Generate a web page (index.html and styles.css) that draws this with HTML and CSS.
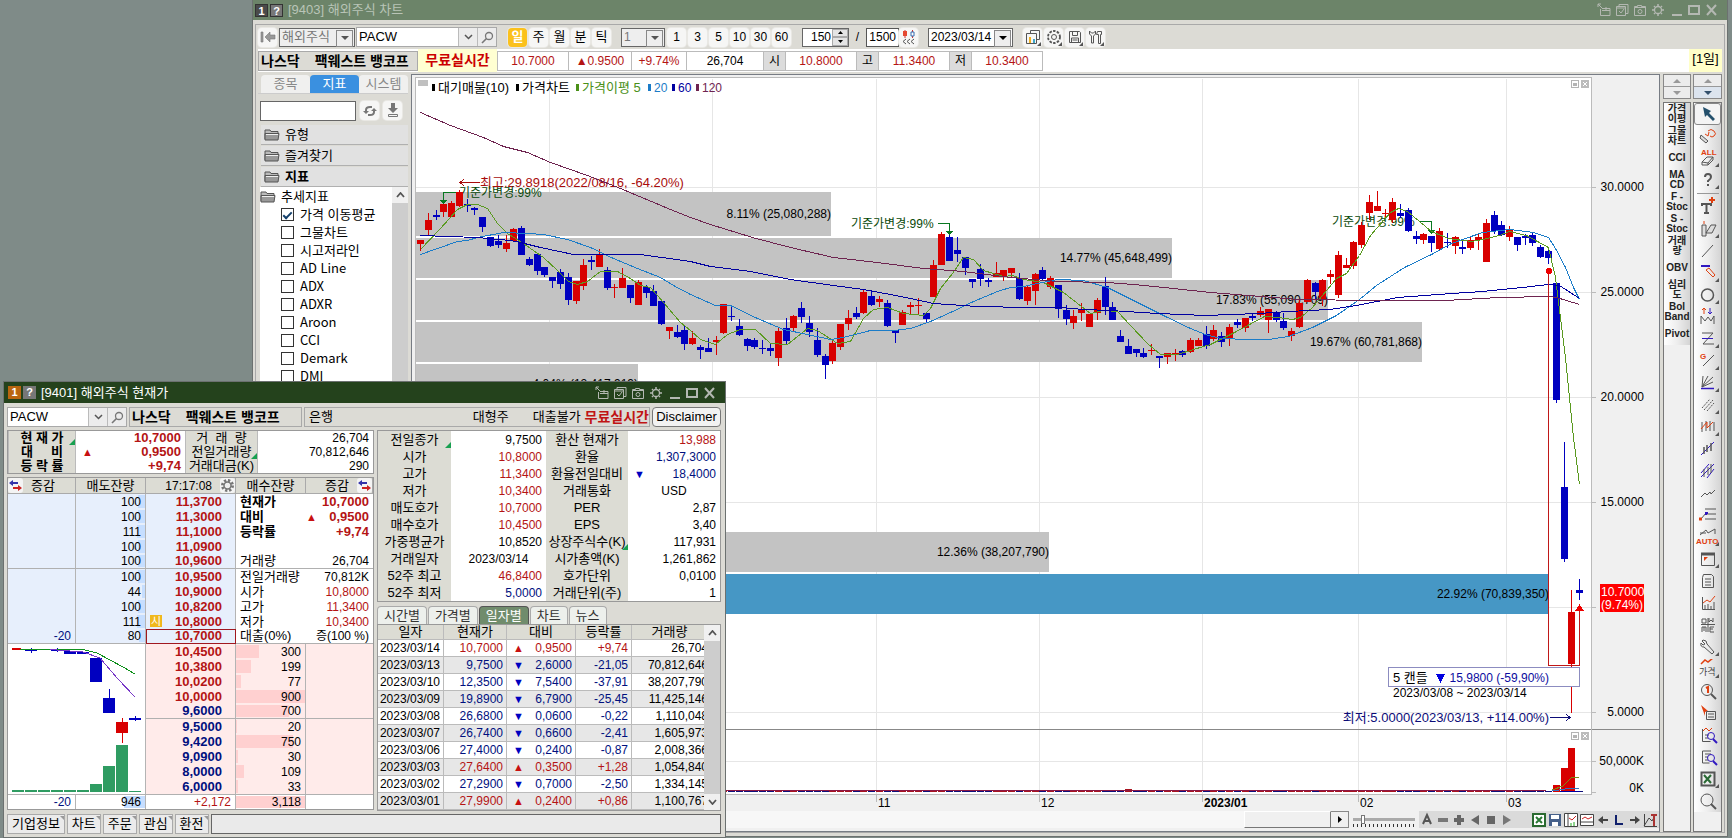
FILE: index.html
```html
<!DOCTYPE html>
<html lang="ko">
<head>
<meta charset="utf-8">
<title>해외주식 차트</title>
<link rel="stylesheet" href="styles.css">
</head>
<body>
<main class="desktop">

<section class="win chart-win" aria-label="해외주식 차트">
  <header class="title">
    <span class="tag">1</span><span class="tag help">?</span>
    <h1>[9403] 해외주식 차트</h1>
    <div class="winctl" data-winctl></div>
  </header>
  <div class="win-body">
    <div class="toolbar">
      <button class="tb ghost" aria-label="처음으로"><svg width="16" height="12"><path d="M1 1h2v10h-2zM5 6l5-5v3h5v4h-5v3z" fill="#999" stroke="#777" stroke-width=".6"/></svg></button>
      <div class="combo market"><select aria-label="시장"><option>해외주식</option></select></div>
      <div class="code"><input type="text" value="PACW" aria-label="종목코드"><button aria-label="목록"><svg width="9" height="6"><path d="M1 1l3.500 3.500L8 1" fill="none" stroke="#555" stroke-width="1.500"/></svg></button><button aria-label="검색"><svg width="13" height="13"><circle cx="8" cy="5" r="3.500" fill="none" stroke="#777" stroke-width="1.300"/><path d="M5.500 7.500L1 12" stroke="#777" stroke-width="1.600"/></svg></button></div>
      <div class="group periods"><button class="tb on">일</button><button class="tb">주</button><button class="tb">월</button><button class="tb">분</button><button class="tb">틱</button></div>
      <div class="combo minute"><select aria-label="간격"><option>1</option></select></div>
      <div class="group minutes"><button class="tb">1</button><button class="tb">3</button><button class="tb">5</button><button class="tb">10</button><button class="tb">30</button><button class="tb">60</button></div>
      <div class="spin"><input type="text" value="150" aria-label="조회 개수"><div><button aria-label="증가"><svg width="5" height="3"><path d="M0 3h5L2.500 0z"/></svg></button><button aria-label="감소"><svg width="5" height="3"><path d="M0 0h5L2.500 3z"/></svg></button></div></div>
      <span class="slash">/</span>
      <input class="total" type="text" value="1500" aria-label="전체 개수">
      <button class="tb fetch" aria-label="이전 데이터"><svg width="14" height="15"><path d="M3 0v8M10.500 0v8" stroke="#c33"/><path d="M1 1h4v5H1z" fill="#e54830"/><path d="M9 2h3v4H9z" fill="#fff" stroke="#356ab0"/><path d="M4 9L1 11.500 4 14M8 9l-3 2.500L8 14M12 9l-3 2.500L12 14" fill="none" stroke="#555"/></svg></button>
      <div class="combo date"><select aria-label="기준일"><option>2023/03/14</option></select></div>
      <div class="group tools">
        <button class="tb more" aria-label="차트 종류"><svg width="16" height="16" fill="none" stroke="#555"><path d="M5.500 4V1.500h9v9H12M1.500 4.500h10v10h-10z"/><path d="M5 14V8" stroke="#f0b020" stroke-width="2"/><path d="M9 14V10" stroke="#40a8c8" stroke-width="2"/></svg></button>
        <button class="tb more" aria-label="설정"><svg width="16" height="16" fill="none" stroke="#555"><circle cx="8" cy="8" r="6" stroke-dasharray="2.500 1.300" stroke-width="1.800"/><circle cx="8" cy="8" r="2.500"/></svg></button>
        <button class="tb more" aria-label="저장"><svg width="14" height="14" fill="none" stroke="#555"><path d="M1.500 1.500h10l1 1v10h-11zM4.500 1.500v4h5v-4M3.500 12v-4h7v4M4.500 10h5"/></svg></button>
        <button class="tb more" aria-label="도구"><svg width="15" height="15" fill="none" stroke="#555"><path d="M1.500 1v3l2 2v7h2V6l2-2V1l-2 2h-2zM9.500 1.500h4v3h-1v9h-2v-9h-2z"/></svg></button>
      </div>
    </div>

    <div class="info">
      <div class="name"><b>나스닥</b><b>팩웨스트 뱅코프</b></div>
      <strong class="free">무료실시간</strong>
      <div class="quotes">
        <span class="up w72">10.7000</span><span class="up w63">▲0.9500</span><span class="up w55">+9.74%</span><span class="w77">26,704</span>
        <span class="k">시</span><span class="up w72">10.8000</span><span class="k">고</span><span class="up w72">11.3400</span><span class="k">저</span><span class="up w72">10.3400</span>
      </div>
      <span class="unit">[1일]</span>
    </div>

    <div class="work">
      <aside class="side">
        <div class="tabs3"><button>종목</button><button class="on">지표</button><button>시스템</button></div>
        <div class="find"><input type="text" aria-label="지표 검색">
          <button class="tb" aria-label="새로고침"><svg width="14" height="12" fill="none" stroke="#777" stroke-width="2"><path d="M3 7V5q0-3 4-3h2M11 5v2q0 3-4 3H5"/><path d="M0 6h6l-3 3zM8 6h6l-3-3z" fill="#777" stroke="none"/></svg></button>
          <button class="tb" aria-label="내려받기"><svg width="12" height="15" fill="#777"><path d="M4 0h4v5h3l-5 5-5-5h3z"/><path d="M1.500 11.500h9v2h-9z" fill="none" stroke="#777"/></svg></button></div>
        <button class="sec" data-folder>유형</button>
        <button class="sec" data-folder>즐겨찾기</button>
        <button class="sec cur" data-folder>지표</button>
        <div class="tree">
          <div class="items"><div class="node" data-folder>추세지표</div><div id="indicators"></div></div>
          <div class="vbar"><button aria-label="위로"><svg width="9" height="6"><path d="M1 5l3.500-4L8 5" fill="none" stroke="#555" stroke-width="1.800"/></svg></button></div>
        </div>
      </aside>

      <div class="chart">
        <svg id="chart" viewBox="412 75 1247 736" role="img" aria-label="PACW 일봉 차트"></svg>
        <div class="nav">
          <div class="track"><span class="thumb"></span><button aria-label="오른쪽"><svg width="4" height="7"><path d="M0 0v7l4-3.500z"/></svg></button></div>
          <input class="zoom" type="range" min="0" max="100" value="13" aria-label="확대">
          <div class="navtools" id="navtools"></div>
        </div>
      </div>

      <div class="rail">
        <div class="updown"><button aria-label="위로"><svg width="8" height="4"><path d="M0 4h8L4 0z"/></svg></button><button aria-label="아래로"><svg width="8" height="4"><path d="M0 0h8L4 4z"/></svg></button></div>
        <div class="rail-body"><div class="rail-items words">
          <button>가격<br>이평</button><button>그물<br>차트</button><button>CCI</button><button>MA<br>CD</button><button>F -<br>Stoc</button><button>S -<br>Stoc</button><button>거래<br>량</button><button>OBV</button><button>심리<br>도</button><button>Bol<br>Band</button><button>Pivot</button>
        </div></div>
      </div>
      <div class="rail draw">
        <div class="updown"><button aria-label="위로"><svg width="8" height="4"><path d="M0 4h8L4 0z"/></svg></button><button class="blue" aria-label="아래로"><svg width="8" height="4"><path d="M0 0h8L4 4z"/></svg></button></div>
        <div class="rail-body"><div class="rail-items" id="drawtools"></div></div>
      </div>
    </div>
  </div>
</section>

<section class="win quote-win" aria-label="해외주식 현재가">
  <header class="title">
    <span class="tag">1</span><span class="tag help">?</span>
    <h2>[9401] 해외주식 현재가</h2>
    <div class="winctl" data-winctl></div>
  </header>
  <div class="q-body">
    <div class="q-top">
      <div class="code"><input type="text" value="PACW" aria-label="종목코드"><button aria-label="목록"><svg width="9" height="6"><path d="M1 1l3.500 3.500L8 1" fill="none" stroke="#555" stroke-width="1.500"/></svg></button><button aria-label="검색"><svg width="13" height="13"><circle cx="8" cy="5" r="3.500" fill="none" stroke="#777" stroke-width="1.300"/><path d="M5.500 7.500L1 12" stroke="#777" stroke-width="1.600"/></svg></button></div>
      <div class="name"><b>나스닥</b><b>팩웨스트 뱅코프</b></div>
      <div class="sector"><span>은행</span><span class="push">대형주</span><span>대출불가</span><strong>무료실시간</strong></div>
      <button class="disc">Disclaimer</button>
    </div>
    <div class="q-main">
      <div class="q-left">
        <table class="sum">
          <colgroup><col class="c68"><col class="c109"><col class="c73"><col></colgroup>
          <tr><th class="mark wide">현 재 가</th><td class="up b">10,7000</td><th>거 &nbsp;래 &nbsp;량</th><td>26,704</td></tr>
          <tr><th class="wide">대 &nbsp; &nbsp; 비</th><td class="up b"><i>▲</i>0,9500</td><th class="mark">전일거래량</th><td>70,812,646</td></tr>
          <tr><th class="wide">등 락 률</th><td class="up b">+9,74</td><th>거래대금(K)</th><td>290</td></tr>
        </table>
        <table class="book">
          <colgroup><col class="c68"><col class="c70"><col class="c90"><col class="c70"><col></colgroup>
          <thead><tr><th><div class="hd"><svg class="sw" width="15" height="15"><path d="M1 5l4-3v2h5v2H5v2z" fill="#33a"/><path d="M14 10l-4-3v2H5v2h5v2z" fill="#c22"/></svg>증감</div></th><th>매도잔량</th><th><div class="hd end"><time>17:17:08</time><svg class="sw" width="15" height="15"><circle cx="7.500" cy="7.500" r="5" fill="none" stroke="#777" stroke-width="3" stroke-dasharray="2.200 1.700"/><circle cx="7.500" cy="7.500" r="3.500" fill="#eee" stroke="#777" stroke-width="1.500"/></svg></div></th><th>매수잔량</th><th><div class="hd end">증감<svg class="sw" width="15" height="15"><path d="M1 5l4-3v2h5v2H5v2z" fill="#33a"/><path d="M14 10l-4-3v2H5v2h5v2z" fill="#c22"/></svg></div></th></tr></thead>
          <tbody id="book"></tbody>
        </table>
      </div>
      <div class="q-right">
        <table class="facts">
          <colgroup><col class="c72"><col class="c95"><col class="c82"><col></colgroup>
          <tr><th class="mark">전일종가</th><td>9,7500</td><th>환산 현재가</th><td class="up">13,988</td></tr>
          <tr><th>시가</th><td class="up">10,8000</td><th>환율</th><td class="dn">1,307,3000</td></tr>
          <tr><th>고가</th><td class="up">11,3400</td><th>환율전일대비</th><td class="dn"><i>▼</i>18,4000</td></tr>
          <tr><th>저가</th><td class="up">10,3400</td><th>거래통화</th><td class="ctr">USD</td></tr>
          <tr><th>매도호가</th><td class="up">10,7000</td><th>PER</th><td>2,87</td></tr>
          <tr><th>매수호가</th><td class="up">10,4500</td><th>EPS</th><td>3,40</td></tr>
          <tr><th>가중평균가</th><td>10,8520</td><th class="mark">상장주식수(K)</th><td>117,931</td></tr>
          <tr><th>거래일자</th><td class="ctr">2023/03/14</td><th>시가총액(K)</th><td>1,261,862</td></tr>
          <tr><th>52주 최고</th><td class="up">46,8400</td><th>호가단위</th><td>0,0100</td></tr>
          <tr><th>52주 최저</th><td class="dn">5,0000</td><th>거래단위(주)</th><td>1</td></tr>
        </table>
        <div class="tabs5"><button>시간별</button><button>가격별</button><button class="on">일자별</button><button>차트</button><button>뉴스</button></div>
        <div class="daily">
          <div class="clip"><table>
            <colgroup><col class="c66"><col class="c63"><col class="c69"><col class="c56"><col></colgroup>
            <thead><tr><th>일자</th><th>현재가</th><th>대비</th><th>등락률</th><th>거래량</th></tr></thead>
            <tbody id="daily"></tbody>
          </table></div>
          <div class="vbar"><button aria-label="위로"><svg width="9" height="6"><path d="M1 5l3.500-4L8 5" fill="none" stroke="#555" stroke-width="1.800"/></svg></button><button aria-label="아래로"><svg width="9" height="6"><path d="M1 1l3.500 4L8 1" fill="none" stroke="#555" stroke-width="1.800"/></svg></button></div>
        </div>
      </div>
    </div>
    <div class="q-foot"><button>기업정보</button><button>차트</button><button>주문</button><button>관심</button><button>환전</button><div class="status"></div></div>
  </div>
</section>

</main>
<script src="app.js"></script>
</body>
</html>
```
FILE: styles.css
```css
* { box-sizing: border-box; }
:root {
  --face: #dcdbd5;
  --line: #a9a9a9;
  --up: #b41414;
  --dn: #00107e;
}
html, body { height: 100%; margin: 0; }
body, button, input, select {
  font: 12px/14px "Liberation Sans", "Noto Sans CJK KR", sans-serif;
  color: #000;
}
button { padding: 0; border: 0; background: none; white-space: nowrap; font-size: 13px; }
input, select { margin: 0; border-radius: 0; outline: 0; }
svg { display: block; }
table { border-collapse: separate; border-spacing: 0; table-layout: fixed; width: 100%; }
th { font-weight: 400; font-size: 13px; }
th, td { padding: 0; white-space: nowrap; }
.desktop { position: relative; height: 100%; min-height: 838px; background: #7f8b88; overflow: hidden; }

/* windows */
.win { position: absolute; background: var(--face); border: 1px solid #6c7170; display: flex; flex-direction: column; }
.chart-win { left: 252px; right: 4px; top: 0; bottom: 1px; border-top: 0; }
.quote-win { left: 3px; top: 381px; width: 723px; }
.title { display: flex; align-items: center; gap: 2px; height: 20px; padding: 0 8px 0 2px; background: #6c8469; color: #b9c4b7; }
.title h1, .title h2 { margin: 0 0 0 3px; font-size: 13px; font-weight: 400; }
.quote-win .title { height: 21px; padding-left: 4px; background: #24421c; color: #fff; }
.tag { width: 13px; height: 13px; background: #4a4a4a; border: 1px solid #333; color: #fff; font-size: 11px; line-height: 12px; font-weight: 700; text-align: center; }
.tag.help { background: #777; }
.quote-win .tag { border: 0; line-height: 13px; background: #b9650f; }
.quote-win .tag.help { background: #777; }
.winctl { display: flex; gap: 4px; margin-left: auto; }
.win-body { flex: 1; margin: 4px 2px 3px; padding: 0 2px; border: 1px solid var(--line); display: flex; flex-direction: column; }

/* toolbar */
.toolbar { display: flex; align-items: center; height: 24px; }
.tb { display: grid; place-items: center; width: 19px; height: 19px; border-radius: 4px; background: #f6f6f5; box-shadow: 0 0 0 1px #e9e8e4; }
.tb.on { background: #fbc11c; color: #fff; font-weight: 700; }
.minutes .tb { font-size: 12px; }
.more { position: relative; }
.more::after { content: ""; position: absolute; right: 1px; bottom: 1px; border: 2px solid; border-color: transparent #555 #555 transparent; }
.group { display: flex; gap: 2px; }
.periods { margin-left: 11px; }
.minutes, .market { margin-left: 2px; }
.tools { margin-left: 10px; }
.combo { position: relative; height: 19px; border: 1px solid #666; background: #fff; }
.combo select { width: 100%; height: 100%; padding: 0 2px; border: 0; appearance: none; background: transparent; }
.combo::after { content: ""; position: absolute; right: 5px; top: 7px; border: 4px solid transparent; border-top-color: #555; pointer-events: none; }
.combo::before { content: ""; position: absolute; right: 1px; top: 1px; width: 15px; height: 15px; border: 1px solid #888; background: #eee; pointer-events: none; }
.market { width: 76px; background: #eee; }
.market select { color: #777; font-size: 13px; }
.minute { width: 44px; margin-left: 10px; background: #eee; }
.minute select { color: #777; }
.date { width: 85px; margin-left: 10px; }
.date::after { border-top-color: #000; }
.code { display: flex; height: 20px; margin-left: 1px; border: 1px solid var(--line); background: #fff; }
.code input { width: 101px; border: 0; padding: 0 2px; font-size: 13px; }
.code button { display: grid; place-items: center; width: 19px; border-left: 1px solid #bbb; background: #ececec; }
.spin { display: flex; width: 47px; height: 19px; margin-left: 11px; border: 1px solid #666; background: #fff; }
.spin input { width: 29px; border: 0; padding: 0 1px; text-align: right; }
.spin div { display: grid; flex: 1; }
.spin button { display: grid; place-items: center; background: #e4e4e4; border: 1px solid #aaa; }
.slash { width: 17px; text-align: center; }
.total { width: 33px; height: 19px; padding: 0 2px; border: 1px solid #555; text-align: right; }

/* quote strip */
.info { display: flex; align-items: center; height: 23px; background: #fff; }
.name { display: flex; gap: 15px; width: 160px; height: 20px; padding: 0 2px; align-items: center; border: 1px solid var(--line); background: var(--face); font-size: 14px; white-space: nowrap; }
.free { align-self: stretch; width: 79px; background: #ffffd2; color: #c00; font-size: 14px; line-height: 22px; text-align: center; }
.quotes { display: flex; height: 20px; border: 1px solid #bbb; border-right: 0; }
.quotes span { border-right: 1px solid #bbb; line-height: 18px; text-align: center; }
.quotes .k { width: 22px; background: #dcdcdc; }
.w72 { width: 71px; } .w63 { width: 63px; } .w55 { width: 55px; } .w77 { width: 77px; }
.up { color: var(--up); } .dn { color: var(--dn); }
.unit { align-self: stretch; width: 33px; margin-left: auto; background: #ffffc8; font-size: 13px; line-height: 20px; text-align: center; }

/* sidebar */
.work { flex: 1; display: flex; margin-top: 2px; min-height: 0; }
.side { display: flex; flex-direction: column; width: 150px; margin-right: 3px; min-height: 0; }
.tabs3 { display: flex; height: 19px; margin: 1px 0 7px; padding-left: 3px; border-bottom: 1px solid #ccc; }
.tabs3 button { flex: 1; border-radius: 4px 4px 0 0; background: #f0f0ef; color: #888; }
.tabs3 .on { background: #3a90e0; color: #fff; }
.find { display: flex; gap: 4px; margin: 0 0 4px 2px; }
.find input { width: 96px; height: 20px; border: 1px solid #666; }
.sec { display: flex; align-items: center; gap: 5px; height: 20px; margin: 0 0 1px 3px; padding-left: 3px; background: #e1e1e1; border-bottom: 1px solid #b0b0b0; }
.cur { margin-bottom: 0; font-weight: 700; }
.tree { flex: 1; display: flex; min-height: 0; margin-left: 2px; background: #fff; }
.items { flex: 1; overflow: hidden; font: 13px/16px "Noto Sans CJK KR", sans-serif; }
.node { display: flex; align-items: center; gap: 5px; height: 18px; }
.item { display: flex; align-items: center; gap: 6px; height: 18px; padding-left: 21px; white-space: nowrap; }
.item input { display: grid; place-items: center; width: 13px; height: 13px; appearance: none; border: 1px solid #333; background: #fff; }
.item input:checked::after { content: ""; width: 7px; height: 3px; border: solid #14406c; border-width: 0 0 2px 2px; rotate: -45deg; }
.vbar { display: flex; flex-direction: column; justify-content: space-between; width: 16px; background: #cdcdcd; }
.vbar button { display: grid; place-items: center; height: 16px; background: #f0f0f0; }

/* chart */
.chart { flex: 1; min-width: 0; border: 1px solid #777c84; background: #f0f0f0; }
#chart { width: 100%; height: auto; font-size: 12px; }
#chart .lg { font-size: 13px; }
.nav { display: flex; height: 17px; }
.track { flex: 1; display: flex; justify-content: flex-end; background: #f7f7f7; }
.thumb { width: 87px; background: #f0f0f0; border: 1px solid #fff; border-right-color: #777; border-bottom-color: #777; }
.track button { display: grid; place-items: center; width: 18px; border: 1px solid #888; border-left: 0; background: #f0f0f0; }
.zoom { width: 62px; height: 16px; margin: 0 4px; appearance: none; background: repeating-linear-gradient(90deg, #333 0 1px, transparent 1px 4px) 0 100% / 100% 3px no-repeat; }
.zoom::-webkit-slider-runnable-track { height: 3px; background: #aaa; }
.zoom::-webkit-slider-thumb { appearance: none; width: 4px; height: 9px; margin-top: -3px; border: 1px solid #777; background: #fff; }
.navtools { display: flex; align-items: center; width: 240px; background: #dadada; }

/* right rails */
.rail { display: flex; flex-direction: column; gap: 3px; width: 28px; margin-left: 3px; }
.draw { width: 29px; margin-left: 2px; }
.updown { display: grid; height: 25px; border: 1px solid #888; gap: 1px; background: #999; }
.updown button { display: grid; place-items: center; background: #ececec; fill: #999; }
.updown .blue { background: #dce4ee; fill: #33506c; }
.rail-body { flex: 1; border: 1px solid #777; background: #f0f0f0; }
.rail-items { display: flex; flex-direction: column; background: linear-gradient(90deg, #fff, #eee 50%, #d4d4d4); }
.words button { height: 22px; font-size: 10px; line-height: 10px; font-weight: 700; color: #222; }
.rail-items svg { margin: auto; }
.draw .rail-items button { height: 22px; }
.draw .rail-items .on { border: 1px solid #888; border-radius: 3px; background: #f4f4f4; }
.draw hr { width: 22px; height: 1px; margin: 2px auto; border: 0; background: #999; }

/* quote window */
.q-body { padding: 4px 4px 3px 3px; }
.q-top { display: flex; gap: 2px; }
.quote-win .code { margin: 0; width: 120px; }
.quote-win .code input { flex: 1; min-width: 0; }
.quote-win .name { width: 173px; }
.sector { flex: 1; display: flex; align-items: center; gap: 24px; height: 20px; padding-left: 4px; border: 1px solid var(--line); font-size: 13px; }
.sector .push { margin-left: auto; }
.sector strong { margin-left: -20px; color: #c01414; font-size: 14px; }
.disc { width: 69px; height: 20px; border: 1px solid #777; border-radius: 4px; background: #f2f2f2; }
.q-main { display: flex; gap: 3px; margin-top: 3px; }
.q-left { width: 367px; }
.q-right { flex: 1; min-width: 0; }
.c68 { width: 68px; } .c109 { width: 109px; } .c73 { width: 73px; } .c70 { width: 70px; } .c90 { width: 90px; }
.c72 { width: 73px; } .c95 { width: 95px; } .c82 { width: 82px; }
.c66 { width: 66px; } .c63 { width: 63px; } .c69 { width: 69px; } .c56 { width: 56px; }
.sum, .facts { border: 1px solid #999; background: #fff; }
.sum th, .facts th { position: relative; background: #dcdcd4; text-align: center; }
.sum td, .facts td { position: relative; text-align: right; padding-right: 4px; }
.sum tr { height: 14px; }
.sum td, .sum th { line-height: 14px; }
.sum .wide { font-weight: 700; }
.sum th { border: solid #bbb; border-width: 0 1px; }
.sum .b { font-weight: 700; font-size: 13px; }
.mark::after { content: ""; position: absolute; right: 0; bottom: 0; border: 3px solid; border-color: transparent #18a050 #18a050 transparent; }
td i { position: absolute; left: 6px; font-style: normal; font-size: 11px; }
.sum i, .pair i { color: #c81010; }
.facts i { color: #0000c0; }
.facts tr { height: 17px; }
.facts .ctr { text-align: center; padding: 0; }
.book { margin-top: 3px; border: 1px solid #999; background: #fff; }
.book thead th { height: 15px; background: #dcdcd4; border-right: 1px solid #aaa; border-bottom: 1px solid #aaa; line-height: 14px; }
.hd { display: flex; align-items: center; gap: 8px; }
.hd time { font-size: 12px; }
.hd.end { justify-content: flex-end; }
.sw { background: #f4f4f4; border-radius: 3px; }
.book tbody td { position: relative; height: 15px; line-height: 14px; text-align: right; border-right: 1px solid #b4b4b4; padding-right: 4px; }
.book tbody td:last-child { border-right: 0; }
.book .ask { background: #e7effc; }
.book .bid { background: #ffebea; }
.book tbody .rule td { border-bottom: 1px solid #b0b0b0; }
.book tbody .sum-row td { border-top: 1px solid #b0b0b0; }
.book tbody .price { padding-right: 13px; font-size: 13px; font-weight: 700; }
.book .now { outline: 1px solid #a01820; outline-offset: -1px; }
.book tbody .mini { padding: 0; background: #fff; vertical-align: top; }
.bar { position: absolute; top: 1px; bottom: 1px; z-index: 0; }
.ask .bar, .askt .bar { right: 0; background: #c6deff; }
.bid .bar, .bidt .bar { left: 0; background: #ffd0d0; }
.num { position: relative; }
.open { position: absolute; left: 4px; top: 1px; width: 12px; height: 12px; background: #f0b81c; color: #fff; font-size: 11px; line-height: 12px; font-weight: 400; text-align: center; }
.pair { display: flex; padding-left: 4px; font-size: 13px; }
.pair span:last-child { margin-left: auto; font-size: 12px; }
.pair span:last-child b { font-size: 13px; }
.pair i { left: 70px; }
.tabs5 { display: flex; gap: 1px; height: 18px; margin-top: 4px; }
.tabs5 button { padding: 0 6px; border: 1px solid #aaa; border-bottom: 0; border-radius: 4px 4px 0 0; background: #edf0ec; color: #333; }
.tabs5 .on { background: #708c6c; border-color: #555; color: #fff; }
.daily { display: flex; border: 1px solid #999; background: #fff; }
.clip { flex: 1; min-width: 0; overflow: hidden; }
.clip table { width: calc(100% + 4px); }
.daily th { height: 15px; background: #dcdcd4; border-right: 1px solid #bbb; border-bottom: 1px solid #bbb; line-height: 14px; }
.daily td { position: relative; height: 17px; line-height: 16px; text-align: right; padding-right: 3px; border-right: 1px solid #bbb; border-bottom: 1px solid #bbb; }
.daily td:last-child { padding-right: 0; border-right: 0; }
.daily tr:nth-child(even) td { background: #e7e7e7; }
.daily .up i { color: #c81010; } .daily .dn i { color: #0000c0; }
.q-foot { display: flex; gap: 2px; margin-top: 3px; }
.q-foot button { position: relative; height: 20px; padding: 0 4px; border: 1px solid #aaa; background: #ebebeb; }
.q-foot button::after { content: ""; position: absolute; right: 0; top: 1px; border: 2px solid; border-color: #999 #999 transparent transparent; }
.status { flex: 1; border: 1px solid #666; background: #eaeaea; }
```
FILE: app.js
```js
const RED = '#d80000', BLUE = '#0000c0';

/* window controls */
const ctl = [
  ['고정', '<path d="M1 1l4 4M1 4V1h3M5 5.500h8v7H3.500V6M5 7.500h8M9 4v3"/>'],
  ['복사', '<path d="M4 3V1.500h9v9h-2M1.500 3.500h9v9h-9zM1.500 5h9M4 8l2 2 3-4"/>'],
  ['캡처', '<path d="M1.500 4.500V3.500h3v-1h4v1h4v9h-11zM1.500 4.500h11"/><circle cx="7" cy="8.500" r="2"/>'],
  ['설정', '<circle cx="7" cy="7" r="3.500" stroke-width="1.300"/><path d="M7 1v2M7 11v2M1 7h2M11 7h2M3 3l1 1M10 10l1 1M3 11l1-1M10 4l1-1" stroke-width="1.500"/>'],
  ['최소화', '<path d="M3 12h10" stroke-width="2"/>'],
  ['최대화', '<path d="M2 3h10v8H2z" stroke-width="2"/>'],
  ['닫기', '<path d="M2 2l9 10M11 2L2 12" stroke-width="2"/>']
];
document.querySelectorAll('[data-winctl]').forEach(el => {
  el.innerHTML = ctl.map(c => `<button aria-label="${c[0]}"><svg width="14" height="14" fill="none" stroke="#b4b8b2">${c[1]}</svg></button>`).join('');
});
document.querySelectorAll('[data-folder]').forEach(el => {
  el.insertAdjacentHTML('afterbegin', '<svg width="16" height="13"><path d="M1 11V2h5l1 1.500h7V5" fill="#bbb" stroke="#555"/><path d="M1 12V5.500h14L14 12z" fill="#999" stroke="#555"/><path d="M2 6.500h12" stroke="#eee"/></svg>');
});
document.getElementById('indicators').innerHTML =
  ['가격 이동평균', '그물차트', '시고저라인', 'AD Line', 'ADX', 'ADXR', 'Aroon', 'CCI', 'Demark', 'DMI']
    .map((n, i) => `<label class="item"><input type="checkbox"${i ? '' : ' checked'}>${n}</label>`).join('');

/* candles: wick top, body top, body bottom, wick bottom, direction */
const candles = `240 240 244 251 R|213 220 230 235 R|210 215 217 220 B|204 204 212 217 R|201 203 217 217 R|190 192 206 207 R|199 204 206 212 B|207 208 210 215 B|217 217 227 232 B|237 237 246 247 B|235 241 245 248 B|235 243 249 252 R|228 229 241 242 R|226 228 255 255 B|257 259 265 266 B|254 254 271 275 B|267 267 275 277 B|277 277 281 288 B|269 272 284 289 B|273 277 300 305 B|281 281 301 304 R|259 265 286 290 R|256 260 262 270 B|249 255 267 267 R|267 270 288 290 B|284 287 288 298 R|268 278 288 288 R|285 285 298 303 B|280 282 305 305 R|285 287 293 298 B|285 291 306 306 B|301 301 324 325 B|327 327 331 339 R|325 332 337 338 B|325 330 344 350 B|331 338 344 345 R|345 347 350 359 B|338 348 352 352 B|336 340 342 355 R|304 304 333 334 R|307 316 317 321 B|319 326 335 336 B|338 339 346 351 B|338 340 347 349 B|340 348 349 354 B|343 348 351 356 B|327 331 358 366 R|318 328 341 345 B|315 316 328 331 R|302 308 317 323 B|316 323 332 337 B|328 340 355 357 B|354 356 365 379 B|340 343 361 364 R|324 324 347 350 R|310 318 324 330 R|307 313 317 319 B|289 292 313 314 R|291 296 305 306 B|296 299 302 307 R|300 303 326 327 B|330 330 333 343 B|310 312 325 325 R|302 305 307 314 R|298 305 306 314 R|312 313 319 322 B|260 265 297 297 R|232 234 265 265 R|235 237 261 261 B|237 250 254 262 B|257 257 268 275 B|279 279 282 288 B|264 269 279 286 B|278 280 282 287 B|262 273 277 277 R|270 270 276 281 R|268 268 273 277 R|273 278 299 300 B|286 287 301 305 R|273 274 291 305 R|267 270 279 281 B|276 278 287 289 R|285 285 309 318 B|305 310 319 325 B|310 316 323 329 R|303 310 313 321 R|314 314 327 327 R|298 300 313 320 R|277 286 307 315 B|302 307 320 320 B|330 336 342 342 B|339 346 354 354 B|349 349 353 357 B|348 353 357 358 B|344 350 351 355 R|356 356 358 368 B|353 353 357 364 R|349 353 354 361 R|350 351 355 357 B|338 340 352 353 R|338 340 346 346 R|326 334 346 349 B|325 330 339 341 R|332 336 342 347 B|324 327 339 346 R|319 322 325 328 B|318 318 328 332 R|313 316 318 321 B|307 311 315 317 R|309 309 320 333 R|311 313 320 322 B|313 321 328 330 B|328 331 336 341 R|300 303 327 328 R|279 280 302 302 R|282 283 292 299 B|279 280 299 306 R|270 274 277 284 R|251 255 295 298 R|258 265 268 268 R|241 242 266 269 R|222 225 245 248 R|195 202 213 220 R|191 206 211 211 R|209 213 214 217 R|198 202 220 223 R|204 213 216 218 B|208 210 231 232 B|231 236 239 244 B|233 234 240 244 R|236 236 243 252 B|228 231 249 250 R|233 242 243 248 B|236 237 246 254 R|241 247 249 254 B|237 240 248 250 R|234 237 240 250 R|219 223 262 262 R|211 215 231 234 B|221 225 235 236 B|226 229 237 241 R|237 237 245 251 B|234 236 238 245 B|232 235 243 246 B|245 247 257 258 B|250 251 258 264 B|283 283 400 403 B|442 487 559 562 B|590 612 664 713 R|579 590 593 600 B`
  .split('|').map(s => s.split(' '));
const cx = i => Math.round(420 + i * 7.779);
const rect = (x, y, w, h, f, extra = '') => `<rect x="${x}" y="${y}" width="${w}" height="${h}" fill="${f}" ${extra}/>`;
const line = (d, c, w = 1) => `<path d="${d}" fill="none" stroke="${c}" stroke-width="${w}"/>`;
const text = (x, y, s, c = '#000', extra = '') => `<text x="${x}" y="${y}" fill="${c}" ${extra}>${s}</text>`;
const END = 'text-anchor="end"';
const LG = 'class="lg"';

let g = '<g shape-rendering="crispEdges">';
g += rect(415, 77, 1177, 718, '#fff');
for (const x of [549, 712, 876, 1039, 1202, 1358, 1506]) g += rect(x, 79, 1, 716, '#e6e6e6');
for (const y of [187, 292, 397, 502, 607, 712, 761]) g += rect(416, y, 1176, 1, '#e6e6e6') + rect(1591, y, 5, 1, '#bbb');
const bands = [[192, 44, 831, '8.11% (25,080,288)'], [238, 40, 1172, '14.77% (45,648,499)'], [280, 40, 1328, '17.83% (55,090,709)'], [322, 40, 1422, '19.67% (60,781,868)'], [364, 40, 638, '4.04% (12,417,919)'], [532, 40, 1049, '12.36% (38,207,790)'], [574, 40, 1549, '22.92% (70,839,350)']];
bands.forEach((b, i) => { g += rect(416, b[0], b[2] - 416, b[1], i === 6 ? '#4697c5' : '#c3c3c3') + text(b[2], b[0] + b[1] / 2 + 4, b[3], '#000', END); });
g += text(480, 187, '최고:29.8918(2022/08/16, -64.20%)', '#a80c0c', LG) + line('M460 182.500h20M464 179l-4 3.500 4 3.500', '#a80c0c');
const GR = '#084808';
g += text(459, 197, '기준가변경:99%', GR) + line('M459 192.500h-15.500V202', '#087820') + `<path d="M440 200h7l-3.500 4z" fill="#087820"/>`;
g += text(851, 228, '기준가변경:99%', GR) + line('M938 223.500h11.500V232', '#087820') + `<path d="M946 231h7l-3.500 4z" fill="#087820"/>`;
g += text(1332, 226, '기준가변경:99%', GR) + line('M1420 221.500h11.500V231', '#087820') + `<path d="M1428 230h7l-3.500 4z" fill="#087820"/>`;
candles.forEach((c, i) => {
  const f = c[4] === 'R' ? RED : BLUE, [a, b, d, e] = c.map(Number);
  g += rect(cx(i), a, 1, Math.max(1, e - a), f) + rect(cx(i) - 3, b, 7, Math.max(1, d - b), f);
});
const ma = [
  ['#5a9a20', '420,249 440,228 457,209 467,204 477,204 487,208 497,223 507,233 523,243 543,257 557,270 568,281 577,284 587,281 600,271 617,271 630,278 640,285 650,287 663,302 680,322 690,330 700,339 715,344 727,334 740,329 755,329 770,343 787,344 807,328 817,330 837,343 850,341 863,318 873,309 887,307 903,313 923,315 930,308 940,288 952,273 963,257 973,259 983,270 1003,276 1012,275 1023,279 1043,282 1063,292 1090,313 1103,310 1117,311 1130,325 1147,343 1160,354 1177,354 1193,349 1210,344 1234,332 1264,316 1278,317 1292,319 1300,317 1312,307 1336,278 1346,273 1359,255 1370,235 1390,212 1398,208 1407,211 1431,231 1448,238 1471,241 1482,239 1499,235 1509,231 1526,235 1548,247 1555,277 1565,357 1573,437 1579,484'],
  ['#1b7cc8', '420,254 437,248 457,241 467,240 477,237 503,232 527,233 543,234 567,239 590,247 613,258 637,268 660,277 673,285 690,294 715,305 730,305 757,318 783,329 807,334 830,339 843,337 870,330 893,330 910,328 930,321 950,312 973,301 997,291 1010,287 1023,286 1037,283 1057,279 1083,280 1107,287 1137,302 1163,315 1190,328 1205,334 1220,338 1248,339 1268,339 1288,336 1312,327 1336,315 1359,299 1376,285 1404,267 1431,254 1451,243 1482,232 1509,229 1533,232 1548,237 1555,248 1565,267 1573,287 1579,299'],
  ['#0000a0', '420,235 477,237 510,240 520,242 540,247 573,254 640,254 690,261 710,266 750,271 790,279 833,285 863,289 890,294 910,298 933,303 977,306 1027,307 1060,307 1083,309 1110,310 1157,313 1205,315 1231,314 1258,313 1288,311 1329,309 1356,305 1397,297 1451,293 1482,291 1522,287 1548,284 1559,285 1579,298'],
  ['#6e2450', '420,112 450,125 483,137 503,146 527,152 550,162 587,175 620,188 670,209 690,217 710,224 752,237 790,247 833,257 877,262 923,268 963,271 1010,277 1057,281 1107,282 1133,284 1173,288 1210,292 1261,296 1298,299 1370,300 1444,300 1499,297 1548,296 1556,297 1579,304']
];
ma.forEach(m => { g += `<polyline transform="translate(.5 .5)" points="${m[1]}" fill="none" stroke="${m[0]}"/>`; });

/* measured range */
g += line('M1548.500 271V665.500H1579.500V608', '#c01818') + '<circle cx="1549" cy="271" r="3" fill="#e00"/><path d="M1575 611h9l-4.500-7z" fill="#e00"/>';
g += rect(1388.5, 667.5, 191, 19, '#fff', 'stroke="#8c8cc0"') + text(1393, 682, '5 캔들', '#000', LG) + '<path d="M1436 674h9l-4.500 9z" fill="#0000e0"/>' + text(1549, 682, '15,9800 (-59,90%)', '#0c0ca0', END) + text(1393, 697, '2023/03/08 ~ 2023/03/14');
g += text(1549, 722, '최저:5.0000(2023/03/13, +114.00%)', '#0c0c78', END + ' ' + LG) + line('M1550 717.500h20M1566 714l4 3.500-4 3.500', '#0c0c78');

/* volume */
for (let i = 0; i < 150; i++) {
  const h = { 91: 3, 116: 2, 118: 2, 135: 2, 146: 7, 147: 24, 148: 44 }[i] || 1;
  g += rect(cx(i) - 3, 792 - h, 7, h, h > 1 ? (h > 3 ? RED : '#a81420') : candles[i][4] === 'R' ? '#a81420' : '#10107c');
}
g += rect(416, 790, 1130, 1, '#8c1844');
g += line('M1552 790l11-4 9-9h7', '#7c8a18') + line('M1552 791l20-3h7', '#3870c0') + line('M1560 791.500h20', '#0000a0');
g += rect(412, 729, 1247, 1, '#888') + rect(415, 77, 1177, 1, '#bbb') + rect(415, 77, 1, 718, '#bbb') + rect(1591, 77, 1, 718, '#bbb') + rect(415, 794, 1177, 1, '#bbb') + rect(1591, 792, 5, 1, '#bbb');
for (const y of [80, 732]) g += rect(1571.5, y + .5, 7, 7, '#fff', 'stroke="#b4b4b4"') + rect(1573, y + 3, 4, 3, '#b4b4b4') + rect(1581, y, 8, 8, '#bbb') + line(`M1583 ${y + 2}l4 4M1587 ${y + 2}l-4 4`, '#fff');

/* legend and axes */
g += rect(418, 80, 10, 6, '#c0c0c0');
[[432, '대기매물(10)', '#000'], [516, '가격차트', '#000'], [576, '가격이평 5', '#4a9018'], [648, '20', '#1b7cc8'], [672, '60', '#0000a0'], [696, '120', '#6e2450']].forEach(l => { g += rect(l[0], 84, 3, 7, l[2]) + text(l[0] + 6, 92, l[1], l[2], l[1].length > 3 ? LG : ''); });
[[187, '30.0000'], [292, '25.0000'], [397, '20.0000'], [502, '15.0000'], [712, '5.0000'], [761, '50,000K'], [788, '0K']].forEach(l => { g += text(1644, l[0] + 4, l[1], '#000', END); });
g += rect(1600, 584, 44, 28, '#f00') + text(1601, 596, '10.7000', '#fff') + text(1601, 609, '(9.74%)', '#fff');
[[876, '11'], [1039, '12'], [1202, '2023/01'], [1358, '02'], [1506, '03']].forEach(l => { g += rect(l[0], 795, 1, 7, '#bbb') + text(l[0] + 2, 807, l[1], '#000', l[1].length > 2 ? 'font-weight="700"' : ''); });
document.getElementById('chart').innerHTML = g + '</g>';

/* icons below the chart */
const nav = ['<path d="M4 12L8 3l4 9M6 9h4" fill="none" stroke="#555" stroke-width="2"/>', '<path d="M3 6h10v4H3z" fill="#777"/>', '<path d="M6 3h4v3h3v4h-3v3H6v-3H3V6h3z" fill="#666"/>', '<path d="M12 3v10L4 8z" fill="#666"/>', '<path d="M4 4h8v8H4z" fill="#666"/>', '<path d="M4 3v10l8-5z" fill="#777"/>', '',
  '<path d="M2 2h12v12H2z" fill="#fff" stroke="#2a6a30" stroke-width="2"/><path d="M5 5l6 6M11 5l-6 6" stroke="#2a7a34" stroke-width="2"/>', '<path d="M2 2h12v12H2z" fill="#46608a"/><path d="M4 3h8v4H4zM5 10h6v4H5z" fill="#fff"/>', '<path d="M1.500 1.500h13v13h-13zM5 2v12" fill="#fff" stroke="#444"/><path d="M6 6l3 2 4-4" fill="none" stroke="#c22"/><path d="M8 14v-3M11 14v-4" stroke="#2a2"/>', '<path d="M1.500 2.500h13v11h-13zM2 10h12" fill="#fff" stroke="#444"/><path d="M3 7l3-2 3 2 4-2" fill="none" stroke="#c22"/>', '<path d="M3 8l5-4v3h5v2H8v3z" fill="#444"/>', '<path d="M5 3v9h7" fill="none" stroke="#10206c" stroke-width="2"/>', '<path d="M13 8L8 4v3H3v2h5v3z" fill="#444"/>', '<path d="M1 14L6 6l3 3 4-7M1.500 2v12.500H14" fill="none" stroke="#444"/><path d="M8 3h6M11 3v11" stroke="#a33" stroke-width="2"/>'];
document.getElementById('navtools').innerHTML = nav.map(p => `<button><svg width="16" height="16">${p}</svg></button>`).join('');

/* drawing tools */
const R = 'stroke="#e04010"', P = 'stroke="#3018c0"', K = 'stroke="#555"';
const draw = [
  '<path d="M8 4l2 10 2-2 6 6 2-2-6-6 2-2z" fill="#24506c"/>',
  `<path d="M13 6q3-3 6 0t0 5q-2 2-4 0M10 9l3 2 1-4" ${R}/><path d="M6 10l7 6-2 2-6-5z" fill="#ddd" ${K}/>`,
  `<text x="6" y="8" font-size="8" font-weight="700" fill="#e04010">ALL</text><path d="M7 15l5-5h6l-5 6zM7 15v3h6l5-5v-3M13 16v2" ${K}/>+`,
  `<path d="M10 8q0-3 3-3t3 3q0 2-3 4v1M13 15v2" ${K} stroke-width="2"/>+`,
  `<path d="M7 8h9M11.500 8v9M7 7v3M16 7v3M9 17h5" ${K} stroke-width="2"/><path d="M14 4h6M17 1v6" ${R} stroke-width="2"/>`,
  `<path d="M7 7h4v11H7zM11 15l5-8h5l-4 8h-6z" fill="#ddd" ${K}/><path d="M9 3v3" ${R}/>+`,
  `<path d="M7 17L18 5" ${K}/>`, `<path d="M6 4h9" ${P} stroke-width="2"/><path d="M11 8l3-2 6 7-2 2z" ${R}/>+`,
  `<circle cx="12.500" cy="11" r="6" ${K} stroke-width="1.500"/>+`,
  `<path d="M6 18V10l4 5 3-4 3 4 3-5v8" ${K}/><path d="M9 8V2M7 4l2-2 2 2" ${R}/><path d="M15 2v6M13 6l2 2 2-2" ${P}/>`,
  `<path d="M7 5h11L8 16h11" ${K}/><path d="M7 10.500h11" ${P}/>+`,
  `<text x="5" y="9" font-size="8" font-weight="700" fill="#e04010">G</text><path d="M8 16L19 5" ${K}/>+`,
  `<path d="M7 15L8 4M7 15L13 4M7 15L18 5M7 15l11-5" ${K}/><path d="M6 16.500h13" ${P} stroke-width="1.500"/>+`,
  `<path d="M7 14l8-9M9 16l9-10M12 17l7-8" ${K} stroke-dasharray="2 1"/>+`,
  `<path d="M7 6v10M11 5v10M15 5v10M19 6v9" ${K}/><path d="M6 13l6-7v6l6-6" ${R}/>+`,
  `<path d="M6 17L19 4" ${P}/><path d="M9 9v7M12 7v7M16 5v8" ${K} stroke-width="1.500"/>`,
  `<path d="M6 13L14 4M6 17L19 4M12 18l7-9" ${P}/><path d="M9 9v8M13 7v8M16 4v9" ${K}/>`,
  `<path d="M6 15l4-4 2 2 3-3 1 2 4-4" ${K}/>`,
  `<path d="M10 5h11M10 10h11M10 15h11M6 15l5-6" ${K}/><path d="M10 9h3M11 8v3" ${P} stroke-width="2"/><path d="M4 15h3" ${R} stroke-width="3"/>`,
  `<path d="M5 9l6-5 2 3 7-4v5M5 7h6" ${K}/><text x="1" y="18" font-size="8" fill="#e04010" font-weight="700">AUTO</text>+`,
  `<path d="M6.500 5.500h13v12h-13z" ${K}/><path d="M6 6h14" ${K} stroke-width="3"/><path d="M9 9h4l-4 4z" fill="#e04010"/>+`,
  `<path d="M8.500 4.500h8l2 2v11h-11v-10zM10 9h6M10 12h6M10 15h6" ${K}/>`,
  `<path d="M7.500 5v12.500H20M10 17v-4M13 17v-5M16 17v-3M19 17v-7" ${K}/><path d="M8 11l4-3 3 2 5-6" ${R}/>`,
  `<path d="M7 5h4v4H7zM14 4v4l2-2 2 2V4M6 10.500h14M13 4v14M7 18v-5h4v5M9 13v4M15 18v-5h4M15 15h3M15 18h4" ${K}/>`,
  `<path d="M7 5l3 3-2 1-2-2q-1 4 3 4l8 7 2-2-7-8q0-4-4-4z" ${K}/>+`,
  `<path d="M6 6l4-4 3 2 5-4" ${R} stroke-width="1.500"/><text x="4" y="17" font-size="9" fill="#444">가격</text>+`,
  `<circle cx="12" cy="10" r="5.500" ${K}/><path d="M16 14l5 5" ${K} stroke-width="2"/><path d="M11 8l2-1v6" ${R} stroke-width="2"/>`,
  `<path d="M6 3l7 6-3 1v4z" fill="#e04010"/><path d="M11.500 9.500h9v8h-9zM13 12h6M13 15h6" ${K}/>`,
  `<path d="M7.500 5v12.500h8M10 11h4M10 14h3" ${K}/><path d="M8 7l3-3 3 3 3-3" ${R}/><circle cx="16" cy="12" r="3.500" ${P}/><path d="M18 15l4 4" ${P} stroke-width="2"/>`,
  `<path d="M16 5H7.500v12h7M10 8h6M10 11h3M10 14h3" ${K}/><circle cx="16" cy="12" r="3.500" ${P}/><path d="M18 15l4 4" ${P} stroke-width="2"/>`,
  `<path d="M6.500 4.500h13v13h-13z" ${K} stroke-width="2"/><path d="M9 7l7 8M16 7l-7 8" stroke="#2a6a34" stroke-width="2"/>+`,
  `<circle cx="12" cy="10" r="6" ${K}/><path d="M16 14l5 5" ${K} stroke-width="2"/>`
];
document.getElementById('drawtools').innerHTML = draw.map((d, i) => {
  const more = d.endsWith('+');
  return `<button class="${i ? '' : 'on'}"><svg width="26" height="20" viewBox="0 1 26 20" fill="none">${more ? d.slice(0, -1) + '<path d="M24 16v4h-4z" fill="#555"/>' : d}</svg></button>${i === 3 ? '<hr>' : ''}`;
}).join('');

/* order book */
const asks = [['11,3700', 100, 7], ['11,3000', 100, 7], ['11,1000', 111, 8], ['11,0900', 100, 7], ['10,9600', 100, 7], ['10,9500', 100, 7], ['10,9000', 44, 3], ['10,8200', 100, 7], ['10,8000', 111, 8], ['10,7000', 80, 6]];
const pairs = [['<b>현재가</b>', '<b>10,7000</b>', 'up'], ['<b>대비</b>', '<b>0,9500</b>', 'up', '▲'], ['<b>등락률</b>', '<b>+9,74</b>', 'up'], ['', '', ''], ['거래량', '26,704', ''], ['전일거래량', '70,812K', ''], ['시가', '10,8000', 'up'], ['고가', '11,3400', 'up'], ['저가', '10,3400', 'up'], ['대출(0%)', '증(100 %)', '']];
const bids = [['10,4500', 300, 23], ['10,3800', 199, 15], ['10,0200', 77, 5], ['10,0000', 900, 69], ['9,6000', 700, 53], ['9,5000', 20, 1], ['9,4200', 750, 57], ['9,0900', 30, 2], ['8,0000', 109, 8], ['6,0000', 33, 2]];
const bar = w => `<span class="bar" style="width:${w}px"></span>`;
let b = asks.map((r, i) => `<tr class="${i === 4 || i === 9 ? 'rule' : ''}"><td class="ask dn">${i === 9 ? '-20' : ''}</td><td class="ask">${bar(r[2])}<span class="num">${r[1]}</span></td><td class="ask price up${i === 9 ? ' now' : ''}">${i === 8 ? '<span class="open">시</span>' : ''}${r[0]}</td><td colspan="2"><div class="pair"><span>${pairs[i][0]}</span>${pairs[i][3] ? '<i>▲</i>' : ''}<span class="${pairs[i][2]}">${pairs[i][1]}</span></div></td></tr>`).join('');
let mini = '<svg width="137" height="150" shape-rendering="crispEdges">';
[2, 2, 2, 2, 2, 2, 8, 26, 47, 1].forEach((h, i) => { mini += rect(4 + i * 13, 148 - h, 12, h, '#2f9c62'); });
mini += rect(4, 4, 9, 2, RED) + rect(17, 6, 12, 1, BLUE) + rect(23, 4, 1, 5, BLUE) + rect(13, 5, 17, 1, '#456') + rect(43, 6, 12, 1, BLUE) + rect(49, 4, 1, 4, BLUE) + rect(56, 7, 12, 3, BLUE) + rect(69, 8, 12, 2, BLUE) + rect(82, 14, 12, 24, BLUE) + rect(95, 54, 12, 15, BLUE) + rect(101, 45, 1, 10, BLUE) + rect(108, 78, 12, 11, RED) + rect(114, 74, 1, 25, RED) + rect(121, 74, 12, 2, BLUE) + rect(127, 72, 1, 5, BLUE) + line('M12 5.500H75L89 9 102 16 115 23 127 30', '#10901c') + line('M42 5.500L75 8 92 14 109 34 127 53', '#7838c8') + '</svg>';
b += bids.map((r, i) => `<tr class="${i === 4 ? 'rule' : ''}">${i ? '' : `<td class="mini" colspan="2" rowspan="10">${mini}</td>`}<td class="bid price ${i < 4 ? 'up' : 'dn'}">${r[0]}</td><td class="bid">${bar(r[2])}<span class="num">${r[1]}</span></td><td class="bid"></td></tr>`).join('');
b += `<tr class="sum-row"><td class="dn">-20</td><td class="askt">${bar(21)}<span class="num">946</span></td><td class="up">+2,172</td><td class="bidt">${bar(69)}<span class="num">3,118</span></td><td></td></tr>`;
document.getElementById('book').innerHTML = b;

/* daily prices */
document.getElementById('daily').innerHTML = [
  ['14', '10,7000', '0,9500', '+9,74', '26,704'], ['13', '9,7500', '2,6000', '-21,05', '70,812,646'], ['10', '12,3500', '7,5400', '-37,91', '38,207,790'], ['09', '19,8900', '6,7900', '-25,45', '11,425,146'], ['08', '26,6800', '0,0600', '-0,22', '1,110,048'], ['07', '26,7400', '0,6600', '-2,41', '1,605,973'], ['06', '27,4000', '0,2400', '-0,87', '2,008,366'], ['03', '27,6400', '0,3500', '+1,28', '1,054,840'], ['02', '27,2900', '0,7000', '-2,50', '1,334,145'], ['01', '27,9900', '0,2400', '+0,86', '1,100,767']
].map(r => { const k = r[3][0] === '+' ? 'up' : 'dn'; return `<tr><td>2023/03/${r[0]}</td><td class="${k}">${r[1]}</td><td class="${k}"><i>${k === 'up' ? '▲' : '▼'}</i>${r[2]}</td><td class="${k}">${r[3]}</td><td>${r[4]}</td></tr>`; }).join('');
```
